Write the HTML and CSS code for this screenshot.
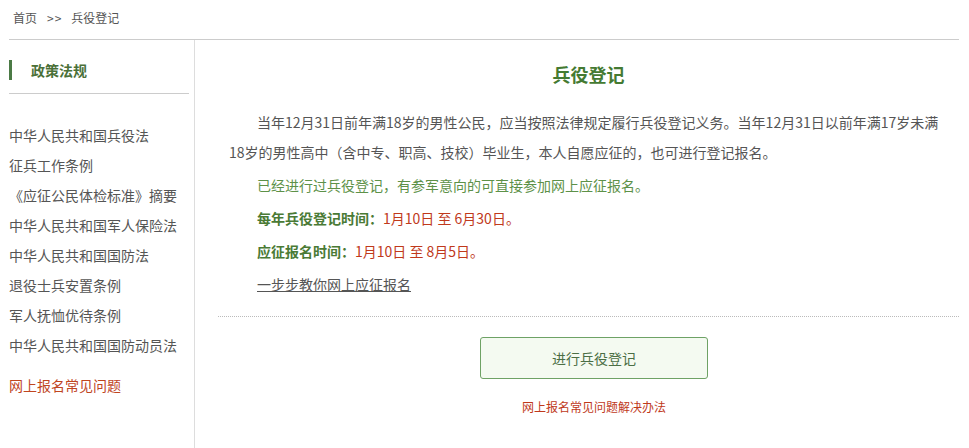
FILE: index.html
```html
<!DOCTYPE html>
<html>

<head>
  <meta charset="UTF-8">
  <title>兵役登记</title>
  <link rel="stylesheet" href="styles.css">
</head>

<body>
  <div class="crumb">
    <a href="#">首页</a><span class="sep">&gt;&gt;</span><span>兵役登记</span>
  </div>

  <div class="wrap">
    <!-- left menu -->
    <div class="side">
      <div class="side-title"><span>政策法规</span></div>
      <ul class="side-list">
        <li><a href="#">中华人民共和国兵役法</a></li>
        <li><a href="#">征兵工作条例</a></li>
        <li><a href="#">《应征公民体检标准》摘要</a></li>
        <li><a href="#">中华人民共和国军人保险法</a></li>
        <li><a href="#">中华人民共和国国防法</a></li>
        <li><a href="#">退役士兵安置条例</a></li>
        <li><a href="#">军人抚恤优待条例</a></li>
        <li><a href="#">中华人民共和国国防动员法</a></li>
        <li class="hot"><a href="#">网上报名常见问题</a></li>
      </ul>
    </div>

    <!-- main content -->
    <div class="main">
      <h2 class="title">兵役登记</h2>
      <div class="text">
        <p class="indent">当年12月31日前年满18岁的男性公民，应当按照法律规定履行兵役登记义务。当年12月31日以前年满17岁未满18岁的男性高中（含中专、职高、技校）毕业生，本人自愿应征的，也可进行登记报名。</p>
        <p class="green">已经进行过兵役登记，有参军意向的可直接参加网上应征报名。</p>
        <p><b>每年兵役登记时间：</b><span class="red">1月10日 至 6月30日。</span></p>
        <p><b>应征报名时间：</b><span class="red">1月10日 至 8月5日。</span></p>
        <p><a class="guide" href="#">一步步教你网上应征报名</a></p>
      </div>
      <div class="action">
        <a class="btn" href="#">进行兵役登记</a>
        <a class="faq" href="#">网上报名常见问题解决办法</a>
      </div>
    </div>
  </div>
</body>

</html>
```

FILE: styles.css
```css
body {
  margin: 0;
  font-family: "Noto Sans CJK SC", "Noto Sans", sans-serif;
  color: #555;
  background-color: #fff;
}

a {
  color: inherit;
  text-decoration: none;
}

.crumb {
  height: 39px;
  line-height: 36px;
  padding-left: 13px;
  font-size: 12px;
  color: #555;
}

.crumb .sep {
  margin: 0 9px 0 10px;
  letter-spacing: 1px;
}

.wrap {
  margin: 0 10px 0 9px;
  border-top: 1px solid #ccc;
  display: flex;
  min-height: 408px;
}

/* left menu */
.side {
  width: 185px;
  border-right: 1px solid #ddd;
}

.side-title {
  margin: 20px 5px 0 0;
  padding-bottom: 13px;
  border-bottom: 1px solid #ccc;
}

.side-title span {
  display: block;
  border-left: 3px solid #4b7a45;
  padding-left: 19px;
  line-height: 20px;
  font-size: 14px;
  font-weight: bold;
  color: #4a7038;
}

.side-list {
  list-style: none;
  margin: 26px 0 0;
  padding: 0;
}

.side-list li {
  line-height: 30px;
  font-size: 14px;
  color: #555;
  white-space: nowrap;
}

.side-list .hot {
  margin-top: 10px;
  color: #c0451f;
}

/* main */
.main {
  flex: 1;
  padding: 19px 0 0 23px;
}

.title {
  margin: 0 0 18px;
  line-height: 30px;
  font-size: 18px;
  text-align: center;
  color: #447a32;
}

.text {
  padding: 0 14px 0 11px;
  font-size: 14px;
}

.text p {
  margin: 0 0 3px;
  line-height: 30px;
  padding-left: 28px;
}

.text p.indent {
  padding-left: 0;
  text-indent: 28px;
}

.text .green {
  color: #5d9148;
}

.text b {
  color: #4a7a35;
}

.text .red {
  color: #c0391b;
}

.guide {
  text-decoration: underline;
  color: #555;
}

.action {
  margin-top: 17px;
  padding: 20px 0 0 11px;
  border-top: 1px dotted #bbb;
  display: flex;
  flex-direction: column;
  align-items: center;
}

.btn {
  width: 226px;
  height: 40px;
  line-height: 40px;
  text-align: center;
  font-size: 14px;
  color: #4b6e45;
  background-color: #f4faf1;
  border: 1px solid #6ea265;
  border-radius: 3px;
}

.faq {
  margin-top: 18px;
  line-height: 20px;
  font-size: 12px;
  color: #c0391b;
}
```
